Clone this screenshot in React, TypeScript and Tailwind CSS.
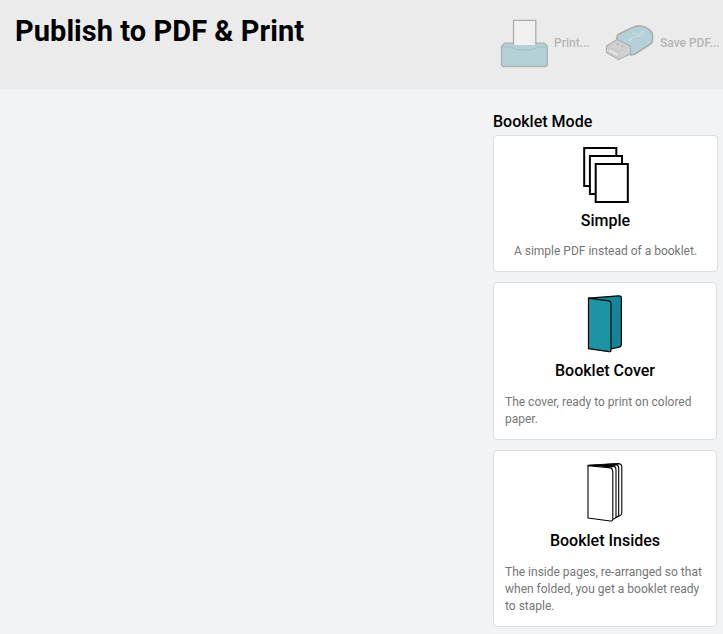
import type { ReactNode } from "react";

function PrinterIcon() {
  return (
    <svg width="50" height="50" viewBox="0 0 50 50" className="shrink-0">
      <path d="M4.500 25.200H44.500l2.800 3.300V46.500q0 2-2 2H3.500q-2 0-2-2v-18z" fill="#b3d1d7" stroke="#aeb0b0" strokeWidth="1.300" strokeLinejoin="round" />
      <path d="M2 29h9.500q3 3 13 3T38 29h8.500" fill="none" stroke="#a3bec3" strokeWidth="1" />
      <path d="M13.500 27V2.400h22.300V27" fill="#f0f0f0" stroke="#acacac" strokeWidth="1.300" />
      <path d="M14.200 27.500h21v1.200q-3 1.600-10.500 1.600t-10.500-1.600z" fill="#b3d1d7" />
    </svg>
  );
}

function UsbIcon() {
  return (
    <svg width="50" height="38" viewBox="0 0 50 38" className="shrink-0">
      <path d="M12 15.500V13q0-2 2-3L27 3.700q5-2.200 9-1.700 5 .5 8 3.500 3.500 2.500 3.500 5.500v6q0 2-2 3L30 30q-2 1-4.500 1z" fill="#b3d1d7" stroke="#acafaf" strokeWidth="1.700" strokeLinejoin="round" />
      <path d="M12 15.500 25.500 22v8L13.500 35.500 1.500 28.500V22z" fill="#d1d1d1" stroke="#b0b0b0" strokeWidth="1.300" strokeLinejoin="round" />
      <path d="m2.500 22.500 11.500 5.500 10.500-5.500M14 28.500V35" fill="none" stroke="#c6c6c6" />
      <path d="m3.500 24.500 9.500 4.500v3.800l-9.500-5.200z" fill="#e5e5e5" stroke="#c0c0c0" strokeWidth=".6" />
      <path d="m11 20 2-1 1.500 1.200-2 1zM15.500 22l2-1 1.500 1.200-2 1z" fill="#b5b5b5" />
      <path d="m24.500 15.500 14-7.500M29 13l-.5-3.500 3.500-.5M31 12l5 .5 3-2" fill="none" stroke="#c5dbdf" strokeWidth="1.200" />
      <circle cx="25" cy="15.500" r="1.600" fill="#c5dbdf" />
      <path d="m36.500 7.500 4-1.500-1.500 3z" fill="#c5dbdf" />
    </svg>
  );
}

function PagesIcon() {
  return (
    <svg width="70" height="60" viewBox="0 0 70 60" className="shrink-0" fill="#fff" stroke="#000" strokeWidth="2">
      <rect x="13.200" y="2" width="32.100" height="38" />
      <rect x="18.900" y="10" width="32.100" height="38" />
      <rect x="24.700" y="18" width="32.100" height="38" />
    </svg>
  );
}

function CoverIcon() {
  return (
    <svg width="70" height="60" viewBox="0 0 70 60" className="shrink-0" stroke="#000" strokeWidth="1.200" strokeLinejoin="round">
      <path d="M18.500 3.200 48.600.8q2.800-.2 2.800 2v46.500q0 2.400-2.200 2.800L40.800 54 37 8z" fill="#138799" />
      <path d="m18.500 3.200 20 2.600q2.500.4 2.500 3V55q0 2-2 1.700L18.500 53.700z" fill="#1c94a5" />
    </svg>
  );
}

function InsidesIcon() {
  return (
    <svg width="70" height="60" viewBox="0 0 70 60" className="shrink-0" fill="#fff" stroke="#000" strokeWidth="1.100" strokeLinejoin="round">
      <path d="M18 2.400 48 .6q3.600 0 3.800 3V50q0 2-2.500 3L43 55z" />
      <path d="m18 2.600 26-1.500q4.700.1 4.700 4V52q0 1.500-3 2.500" />
      <path d="M18 2.600h24q4 .4 4 4.400V54q0 1.500-3 2" />
      <path d="M18 2.600 41 1.700l6 .9-5 1.800z" fill="#000" stroke="none" />
      <path d="m18 2.800 21 1.800q3.600.4 3.800 4V56q0 2.200-2.500 2L18 55z" />
    </svg>
  );
}

type CardProps = { icon: ReactNode; title: string; text: string; className: string; titleClass: string; textClass: string };

function ModeCard({ icon, title, text, className, titleClass, textClass }: CardProps) {
  return (
    <button className={`flex flex-col items-center rounded-[4px] border border-[#dedede] bg-white ${className}`}>
      {icon}
      <span className={`text-[16px] leading-6 font-medium text-black ${titleClass}`}>{title}</span>
      <span className={`text-left text-[12px] leading-[17px] text-[#767676] ${textClass}`}>{text}</span>
    </button>
  );
}

export default function App() {
  return (
    <div className="flex h-[634px] w-[723px] flex-col overflow-hidden bg-[#f1f3f4] font-[Roboto,sans-serif]">
      <header className="flex h-[89px] shrink-0 justify-between bg-[#ebebeb] pl-[15px]">
        <h1 className="mt-[12px] text-[29px] leading-[38px] font-bold tracking-[0.05px] whitespace-nowrap text-black">Publish to PDF &amp; Print</h1>
        <div className="flex h-[86px] w-[223px] items-center text-[12px] font-medium text-[#b6b6b6]">
          <button className="flex w-[105px] items-center gap-[4px]">
            <PrinterIcon />
            <span>Print...</span>
          </button>
          <button className="flex items-center gap-[5px] whitespace-nowrap">
            <UsbIcon />
            <span>Save PDF...</span>
          </button>
        </div>
      </header>
      <main className="flex grow flex-col pt-[20px] pl-[493px]">
        <h2 className="h-[26px] text-[16px] leading-[26px] font-medium text-black">Booklet Mode</h2>
        <div className="flex flex-col items-start gap-[10px]">
          <ModeCard icon={<PagesIcon />} title="Simple" text="A simple PDF instead of a booklet." className="h-[137px] w-[225px] px-[11px] pt-[10px]" titleClass="mt-[3px]" textClass="mt-[10px]" />
          <ModeCard icon={<CoverIcon />} title="Booklet Cover" text="The cover, ready to print on colored paper." className="h-[158px] w-[224px] px-[11px] pt-[12px]" titleClass="mt-[4px]" textClass="mt-[11px]" />
          <ModeCard icon={<InsidesIcon />} title="Booklet Insides" text="The inside pages, re-arranged so that when folded, you get a booklet ready to staple." className="h-[177px] w-[224px] px-[11px] pt-[12px]" titleClass="mt-[6px]" textClass="mt-[11px]" />
        </div>
      </main>
    </div>
  );
}
